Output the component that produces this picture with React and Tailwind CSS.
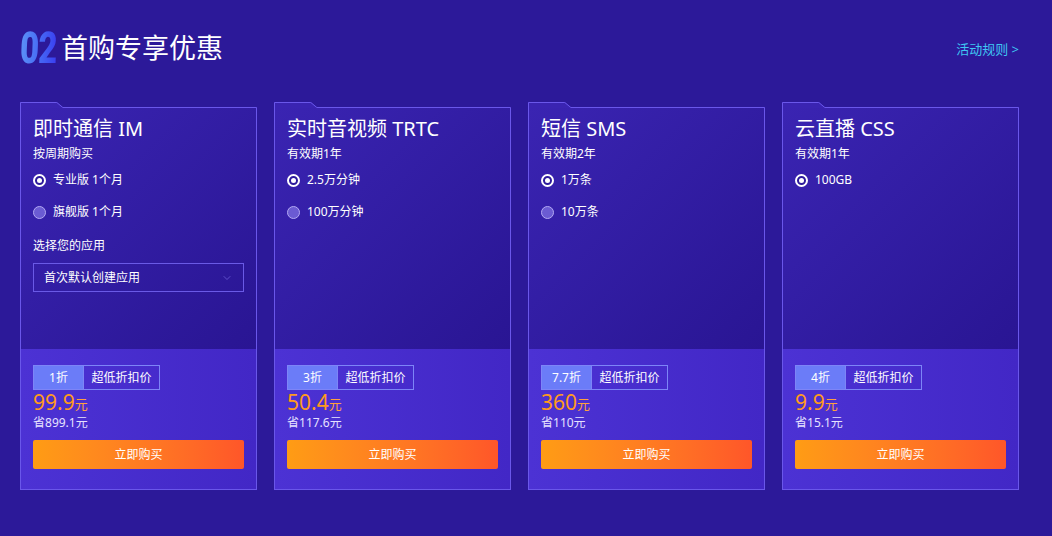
import { ChevronDown } from 'lucide-react';

const cards = [
  {
    title: '即时通信 IM',
    sub: '按周期购买',
    options: ['专业版 1个月', '旗舰版 1个月'],
    select: true,
    discount: '1折',
    price: '99.9',
    save: '899.1',
  },
  {
    title: '实时音视频 TRTC',
    sub: '有效期1年',
    options: ['2.5万分钟', '100万分钟'],
    discount: '3折',
    price: '50.4',
    save: '117.6',
  },
  {
    title: '短信 SMS',
    sub: '有效期2年',
    options: ['1万条', '10万条'],
    discount: '7.7折',
    price: '360',
    save: '110',
  },
  {
    title: '云直播 CSS',
    sub: '有效期1年',
    options: ['100GB'],
    discount: '4折',
    price: '9.9',
    save: '15.1',
  },
];

function Radio({ checked, label }) {
  return (
    <div className="flex items-center h-4">
      {checked ? (
        <span className="w-[13px] h-[13px] rounded-full border-2 border-white flex items-center justify-center bg-[#2d1a9c]">
          <span className="w-[5px] h-[5px] rounded-full bg-white" />
        </span>
      ) : (
        <span className="w-[13px] h-[13px] rounded-full border border-[#b3a9f3] bg-[#6b5bd3]" />
      )}
      <span className="ml-[7px] text-[12px] leading-4 text-white">{label}</span>
    </div>
  );
}

function Card({ c }) {
  return (
    <div className="w-[237px] flex flex-col">
      <svg width="237" height="6" className="block">
        <path d="M0 6 L0 0 L37 0 L43 5 L237 5 L237 6 Z" fill="#3a24b2" />
        <path
          d="M0.5 6 L0.5 0.5 L36.8 0.5 L42.8 5.5 L236.5 5.5 L236.5 6"
          fill="none"
          stroke="#6a57ea"
          strokeWidth="1"
        />
      </svg>
      <div className="border-x border-b border-[#6a57ea] flex flex-col">
        <div className="h-[241px] bg-linear-to-br from-[#3a24b2] to-[#291593] px-3 pt-[9px]">
          <div className="text-[20px] leading-6 text-white">{c.title}</div>
          <div className="mt-[5px] text-[12px] leading-4 text-white">{c.sub}</div>
          <div className="mt-[10px] flex flex-col gap-4">
            {c.options.map((o, i) => (
              <Radio key={o} checked={i === 0} label={o} />
            ))}
          </div>
          {c.select && (
            <>
              <div className="mt-[18px] text-[12px] leading-4 text-white">选择您的应用</div>
              <div className="mt-[9px] h-[29px] border border-[#6a5ae6] flex items-center justify-between pl-[10px] pr-[10px]">
                <span className="text-[12px] text-white">首次默认创建应用</span>
                <ChevronDown className="w-3 h-3 text-[#6f60da]" strokeWidth={1.5} />
              </div>
            </>
          )}
        </div>
        <div className="h-[140px] bg-linear-to-r from-[#4c32d4] to-[#4227c6] px-3 pt-[16px]">
          <div className="flex h-[25px] text-[12px] text-white">
            <div className="w-[51px] bg-[#6b7cf8] border border-[#7d85f7] flex items-center justify-center">
              {c.discount}
            </div>
            <div className="w-[76px] border border-l-0 border-[#7d85f7] flex items-center justify-center">
              超低折扣价
            </div>
          </div>
          <div className="mt-[2px] h-[20px] flex items-end text-[#ff9a1c]">
            <span className="text-[21px] leading-[20px]">{c.price}</span>
            <span className="text-[13px] leading-[16px] text-[#ffa13d]">元</span>
          </div>
          <div className="mt-[3px] text-[12px] leading-4 text-[#e6e2ff]">省{c.save}元</div>
          <button className="mt-[9px] w-full h-[29px] rounded-[2px] bg-linear-to-r from-[#ff9c14] to-[#ff5629] text-[12px] text-white">
            立即购买
          </button>
        </div>
      </div>
    </div>
  );
}

export default function App() {
  return (
    <div
      className="w-[1052px] h-[536px] bg-[#2c1999] pl-5 pt-[28px]"
      style={{ fontFamily: '"Noto Sans", "Noto Sans CJK SC", sans-serif' }}
    >
      <div className="w-[999px] flex items-center justify-between h-10">
        <div className="flex items-center">
          <span
            className="inline-block text-[44px] leading-10 font-black bg-linear-to-r from-[#5d92f7] to-[#3b3cf0] bg-clip-text text-transparent scale-x-[0.75] origin-left -skew-x-3 -mr-[12px] tracking-[-1px]"
            style={{ fontFamily: 'Roboto, sans-serif' }}
          >
            02
          </span>
          <span className="ml-[4px] text-[27px] leading-10 text-white">首购专享优惠</span>
        </div>
        <span className="mt-[3px] text-[13px] text-[#3fc6f2]">活动规则 &gt;</span>
      </div>
      <div className="mt-[34px] flex gap-[17px]">
        {cards.map((c) => (
          <Card key={c.title} c={c} />
        ))}
      </div>
    </div>
  );
}
